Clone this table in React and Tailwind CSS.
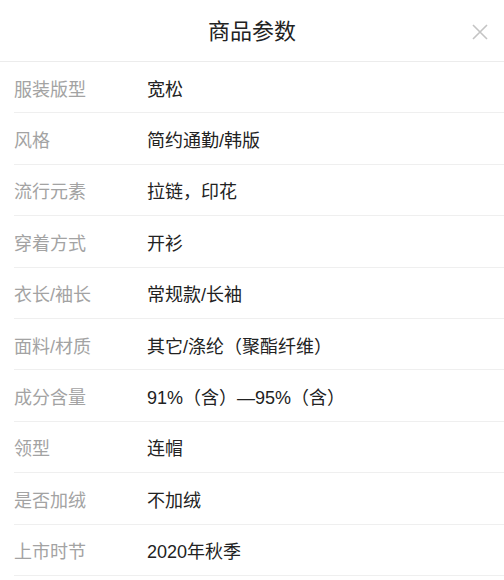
export default function App() {
  const rows = [
    ["服装版型", "宽松"],
    ["风格", "简约通勤/韩版"],
    ["流行元素", "拉链，印花"],
    ["穿着方式", "开衫"],
    ["衣长/袖长", "常规款/长袖"],
    ["面料/材质", "其它/涤纶（聚酯纤维）"],
    ["成分含量", "91%（含）—95%（含）"],
    ["领型", "连帽"],
    ["是否加绒", "不加绒"],
    ["上市时节", "2020年秋季"],
  ];
  return (
    <div
      className="w-[504px] h-[580px] bg-white overflow-hidden"
      style={{ fontFamily: '"Liberation Sans", "Noto Sans CJK SC", sans-serif' }}
    >
      <div className="relative h-[62px] border-b border-[#ececec] flex items-center justify-center">
        <span className="text-[22px] text-[#222] pt-[2px]">商品参数</span>
        <svg className="absolute right-[16px] top-[24px]" width="16" height="16" viewBox="0 0 16 16">
          <path d="M1 1L15 15M15 1L1 15" stroke="#c4c4c4" strokeWidth="1.6" />
        </svg>
      </div>
      <div className="pl-[14px]">
        {rows.map(([k, v]) => (
          <div key={k} className="h-[51.4px] border-b border-[#efefef] flex items-center pt-[5px]">
            <span className="w-[133px] text-[18px] leading-[24px] text-[#a3a3a3]">{k}</span>
            <span className="text-[18px] leading-[24px] text-[#222]">{v}</span>
          </div>
        ))}
      </div>
    </div>
  );
}
